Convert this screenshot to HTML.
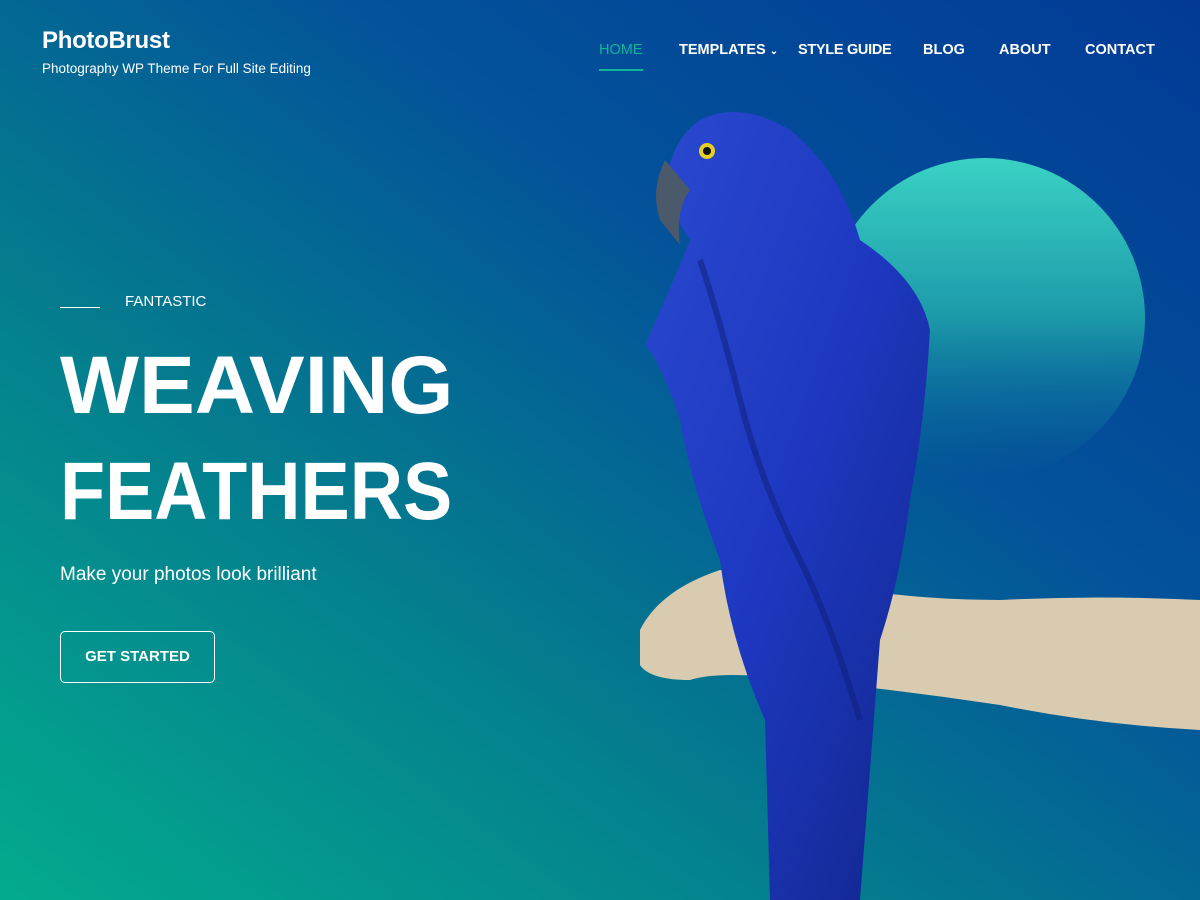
<!DOCTYPE html>
<html><head><meta charset="utf-8"><style>
*{margin:0;padding:0;box-sizing:border-box}
body{width:1200px;height:900px;overflow:hidden;font-family:"Liberation Sans",sans-serif;color:#fff;position:relative;
background:linear-gradient(to top right,#03ab8d 0%,#047d8e 35%,#03529a 65%,#023a96 100%);}
.logo{position:absolute;left:42px;top:27px;font-size:24px;font-weight:bold;letter-spacing:-0.3px}
.tag{position:absolute;left:42px;top:61px;font-size:13.5px}
nav{position:absolute;top:42px;left:599px;font-size:14.5px;font-weight:bold}
nav span{position:absolute;white-space:nowrap}
.home{color:#11b597;font-weight:normal}
.home:after{content:"";position:absolute;left:0;right:0;top:27px;height:2px;background:#11b597}
.line{position:absolute;left:60px;top:307px;width:40px;height:1px;background:#fff}
.fant{position:absolute;left:125px;top:293px;font-size:15px}
.h{position:absolute;left:60px;font-size:82px;line-height:82px;font-weight:bold;white-space:nowrap;transform-origin:left top}
.sub{position:absolute;left:60px;top:564px;font-size:19px}
.btn{position:absolute;left:60px;top:631px;width:155px;height:52px;border:1px solid #fff;border-radius:5px;font-size:15px;font-weight:bold;text-align:center;line-height:50px}
svg{position:absolute;left:0;top:0}
</style></head><body>
<svg width="1200" height="900">
<defs>
<linearGradient id="c" x1="0" y1="0" x2="0" y2="1"><stop offset="0" stop-color="#3ad2c4"/><stop offset="0.5" stop-color="#1c9aa9"/><stop offset="1" stop-color="#0a6f98" stop-opacity="0"/></linearGradient>
<linearGradient id="p" x1="0" y1="0" x2="1" y2="1"><stop offset="0" stop-color="#2a4ad0"/><stop offset="0.5" stop-color="#1d38c0"/><stop offset="1" stop-color="#12258a"/></linearGradient>
</defs>
<circle cx="985" cy="318" r="160" fill="url(#c)"/>
<path d="M640 630 Q660 590 720 570 L800 580 Q900 600 1000 600 Q1100 595 1200 600 L1200 730 Q1100 725 1000 705 Q900 690 800 680 Q720 670 690 680 Q650 680 640 665 Z" fill="#d9cbb0"/>
<path d="M700 120 Q740 100 790 130 Q840 170 860 240 Q920 280 930 330 Q925 420 910 500 Q900 580 880 640 L860 900 L770 900 L765 720 Q730 640 720 560 Q690 480 680 420 Q660 360 645 345 Q670 290 690 240 Q670 210 665 190 Q670 140 700 120 Z" fill="url(#p)"/>
<path d="M700 260 Q720 320 740 400 Q760 480 800 560 Q830 620 860 720" stroke="#0e1e78" stroke-width="6" fill="none" opacity="0.5"/>
<path d="M665 160 Q650 190 660 220 L680 245 Q675 210 690 190 Z" fill="#4a5a6a"/>
<circle cx="707" cy="151" r="8" fill="#e8d020"/><circle cx="707" cy="151" r="4" fill="#111"/>
</svg>
<div class="logo">PhotoBrust</div>
<div class="tag">Photography WP Theme For Full Site Editing</div>
<nav>
<span class="home" style="left:0">HOME</span>
<span style="left:80px">TEMPLATES <small style="font-size:10px">⌄</small></span>
<span style="left:199px;letter-spacing:-0.3px">STYLE GUIDE</span>
<span style="left:324px">BLOG</span>
<span style="left:400px">ABOUT</span>
<span style="left:486px">CONTACT</span>
</nav>
<div class="line"></div>
<div class="fant">FANTASTIC</div>
<div class="h" style="top:345px;transform:scaleX(1.02)">WEAVING</div>
<div class="h" style="top:451px;transform:scaleX(0.9)">FEATHERS</div>
<div class="sub">Make your photos look brilliant</div>
<div class="btn">GET STARTED</div>
</body></html>
